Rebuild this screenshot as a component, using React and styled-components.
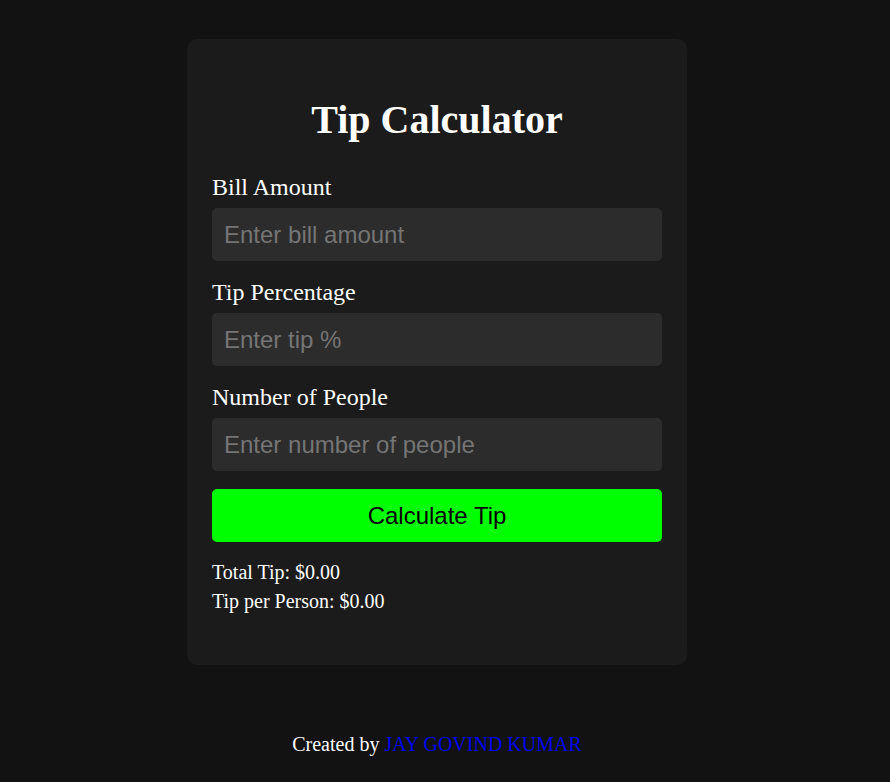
import React, { useState } from 'react';
import styled, { createGlobalStyle } from 'styled-components';

const GlobalStyle = createGlobalStyle`
    html, body {
        margin: 0;
        padding: 0;
        background: #121212;
    }
    body {
        font-family: "Liberation Serif", "Times New Roman", serif;
        color: white;
    }
`;

const App = () => {
    const [bill, setBill] = useState('');
    const [tip, setTip] = useState('');
    const [people, setPeople] = useState('');
    const [result, setResult] = useState({total: 0, perPerson: 0});

    const calculate = () => {
        const b = parseFloat(bill) || 0;
        const t = parseFloat(tip) || 0;
        const p = parseInt(people) || 1;
        const total = b * t / 100;
        setResult({total, perPerson: total / p});
    };

    return (
        <Page>
            <GlobalStyle/>
            <Card>
                <Title>Tip Calculator</Title>
                <Label>Bill Amount</Label>
                <Input type="number" placeholder="Enter bill amount" value={bill}
                       onChange={e => setBill(e.target.value)}/>
                <Label>Tip Percentage</Label>
                <Input type="number" placeholder="Enter tip %" value={tip}
                       onChange={e => setTip(e.target.value)}/>
                <Label>Number of People</Label>
                <Input type="number" placeholder="Enter number of people" value={people}
                       onChange={e => setPeople(e.target.value)}/>
                <Button onClick={calculate}>Calculate Tip</Button>
                <Results>
                    <Line>Total Tip: ${result.total.toFixed(2)}</Line>
                    <Line>Tip per Person: ${result.perPerson.toFixed(2)}</Line>
                </Results>
            </Card>
            <Footer>Created by <Author href="#">JAY GOVIND KUMAR</Author></Footer>
        </Page>
    );
};

export default App;

const Page = styled.div`
    display: flex;
    flex-direction: column;
    align-items: center;
    padding: 39px 16px 0 0;
    min-height: 782px;
    box-sizing: border-box;
`;

const Card = styled.div`
    width: 500px;
    box-sizing: border-box;
    background: #1b1b1b;
    border-radius: 10px;
    padding: 57px 25px 52px;
`;

const Title = styled.h1`
    margin: 0 0 31px;
    font-size: 40px;
    font-weight: bold;
    text-align: center;
`;

const Label = styled.label`
    display: block;
    font-size: 24px;
    margin-bottom: 7px;
`;

const Input = styled.input`
    display: block;
    width: 100%;
    box-sizing: border-box;
    height: 53px;
    margin-bottom: 18px;
    padding: 0 12px;
    border: none;
    border-radius: 5px;
    background: #2c2c2c;
    color: white;
    font-family: "Liberation Sans", Arial, sans-serif;
    font-size: 24px;
    outline: none;
    &::placeholder {
        color: #757575;
    }
    &::-webkit-outer-spin-button,
    &::-webkit-inner-spin-button {
        -webkit-appearance: none;
        margin: 0;
    }
`;

const Button = styled.button`
    display: block;
    width: 100%;
    height: 53px;
    border: none;
    border-radius: 5px;
    background: #00ff00;
    color: black;
    font-family: "Liberation Sans", Arial, sans-serif;
    font-size: 24px;
    cursor: pointer;
`;

const Results = styled.div`
    margin-top: 19px;
    display: flex;
    flex-direction: column;
    gap: 6px;
`;

const Line = styled.p`
    margin: 0;
    font-size: 20px;
`;

const Footer = styled.footer`
    margin-top: 68px;
    font-size: 20px;
`;

const Author = styled.a`
    color: #0000ee;
    text-decoration: none;
`;
